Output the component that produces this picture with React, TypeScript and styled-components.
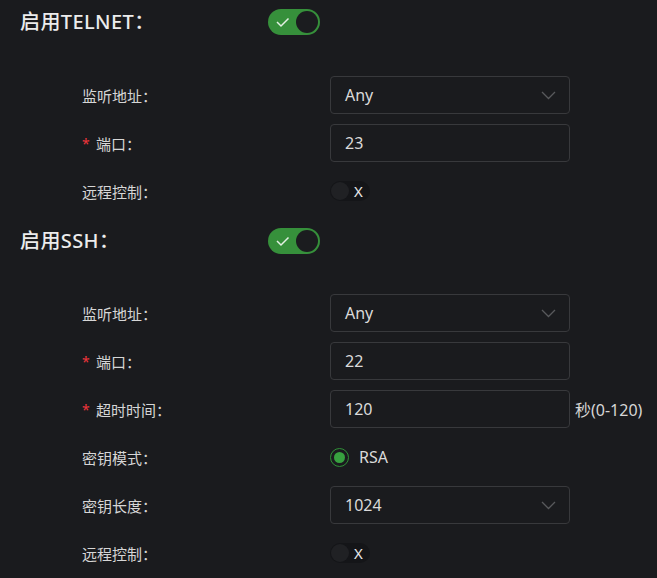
import React from "react";
import styled, { createGlobalStyle } from "styled-components";

const Global = createGlobalStyle`
  html, body { margin: 0; padding: 0; background: #1a1b1e; }
  body { font-family: "Noto Sans", "Noto Sans CJK SC", sans-serif; }
`;

const Page = styled.div`
  width: 657px;
  height: 578px;
  overflow: hidden;
  background: #1a1b1e;
  padding-left: 20px;
  box-sizing: border-box;
`;

const Header = styled.div<{ $first?: boolean }>`
  display: grid;
  grid-template-columns: 248px auto;
  align-items: center;
  height: ${(p) => (p.$first ? 44 : 51)}px;
  margin-bottom: ${(p) => (p.$first ? 27 : 23)}px;
`;

const HeaderTitle = styled.div`
  font-family: "Noto Sans", "Noto Sans CJK SC", sans-serif;
  font-size: 20px;
  font-weight: 500;
  letter-spacing: 0.4px;
  color: #ececec;
  line-height: 1;
`;

const Toggle = styled.div`
  position: relative;
  width: 52px;
  height: 26px;
  border-radius: 13px;
  background: #36903b;
  display: flex;
  align-items: center;
  justify-content: flex-end;
  padding: 0 2px;
  box-sizing: border-box;
`;

const Knob = styled.div`
  width: 22px;
  height: 22px;
  border-radius: 50%;
  background: #1b1c1f;
`;

const Check = styled.svg`
  position: absolute;
  left: 7px;
  top: 8px;
`;

const Row = styled.div`
  display: grid;
  grid-template-columns: 62px 248px auto;
  align-items: center;
  height: 48px;
`;

const Label = styled.div`
  grid-column: 2;
  font-size: 15px;
  color: #d6d6d6;
  display: flex;
  align-items: center;
  font-family: "Noto Sans CJK SC", sans-serif;
`;

const Required = styled.span`
  color: #f0353c;
  font-size: 14px;
  width: 14px;
  font-family: "Noto Sans", sans-serif;
`;

const Control = styled.div`
  grid-column: 3;
  display: flex;
  align-items: center;
`;

const Field = styled.div`
  width: 240px;
  height: 38px;
  box-sizing: border-box;
  border: 1px solid #38393c;
  border-radius: 4px;
  background: #1a1b1e;
  display: flex;
  align-items: center;
  justify-content: space-between;
  padding: 0 13px 0 14px;
  font-size: 16px;
  color: #dadada;
`;

const Suffix = styled.span`
  margin-left: 5px;
  font-size: 16px;
  color: #d6d6d6;
  font-family: "Noto Sans", "Noto Sans CJK SC", sans-serif;
`;

const MiniSwitch = styled.div`
  width: 40px;
  height: 20px;
  border-radius: 10px;
  background: #141518;
  display: flex;
  align-items: center;
  padding: 0 1px;
  box-sizing: border-box;
  gap: 5px;
`;

const MiniKnob = styled.div`
  width: 18px;
  height: 18px;
  border-radius: 50%;
  background: #202124;
`;

const MiniX = styled.span`
  font-size: 15px;
  color: #e8e8e8;
  line-height: 1;
`;

const Radio = styled.div`
  width: 19px;
  height: 19px;
  border-radius: 50%;
  border: 1.5px solid #2f8f37;
  box-sizing: border-box;
  display: flex;
  align-items: center;
  justify-content: center;
  margin-right: 10px;
`;

const RadioDot = styled.div`
  width: 11px;
  height: 11px;
  border-radius: 50%;
  background: #37a13f;
`;

const RadioText = styled.span`
  font-size: 16px;
  color: #dadada;
`;

const Chevron = () => (
  <svg width="15" height="9" viewBox="0 0 15 9">
    <polyline points="1,1 7.5,7.5 14,1" fill="none" stroke="#58595c" strokeWidth="1.3" />
  </svg>
);

const BigToggle = () => (
  <Toggle>
    <Check width="16" height="12" viewBox="0 0 16 12">
      <polyline points="2,5 6,9 13.5,1.5" fill="none" stroke="#e4f0e4" strokeWidth="1.5" />
    </Check>
    <Knob />
  </Toggle>
);

const RemoteSwitch = () => (
  <MiniSwitch>
    <MiniKnob />
    <MiniX>X</MiniX>
  </MiniSwitch>
);

const FormRow = ({ label, required, children }: { label: string; required?: boolean; children: React.ReactNode }) => (
  <Row>
    <Label>
      {required && <Required>*</Required>}
      {label}：
    </Label>
    <Control>{children}</Control>
  </Row>
);

export default function App() {
  return (
    <>
      <Global />
      <Page>
        <Header $first>
          <HeaderTitle>启用TELNET：</HeaderTitle>
          <BigToggle />
        </Header>
        <FormRow label="监听地址">
          <Field>
            Any
            <Chevron />
          </Field>
        </FormRow>
        <FormRow label="端口" required>
          <Field>23</Field>
        </FormRow>
        <FormRow label="远程控制">
          <RemoteSwitch />
        </FormRow>

        <Header>
          <HeaderTitle>启用SSH：</HeaderTitle>
          <BigToggle />
        </Header>
        <FormRow label="监听地址">
          <Field>
            Any
            <Chevron />
          </Field>
        </FormRow>
        <FormRow label="端口" required>
          <Field>22</Field>
        </FormRow>
        <FormRow label="超时时间" required>
          <Field>120</Field>
          <Suffix>秒(0-120)</Suffix>
        </FormRow>
        <FormRow label="密钥模式">
          <Radio>
            <RadioDot />
          </Radio>
          <RadioText>RSA</RadioText>
        </FormRow>
        <FormRow label="密钥长度">
          <Field>
            1024
            <Chevron />
          </Field>
        </FormRow>
        <FormRow label="远程控制">
          <RemoteSwitch />
        </FormRow>
      </Page>
    </>
  );
}
